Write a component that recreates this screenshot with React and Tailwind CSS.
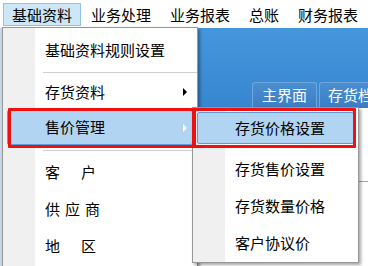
const font = "font-['Microsoft_YaHei','Noto_Sans_CJK_SC',sans-serif]";

function MenuItem({ children, arrow, active, className = '' }) {
  return (
    <div className={`relative flex items-center pl-[42px] pr-[10px] ${className}`}>
      {active && (
        <div className="absolute inset-x-[4px] inset-y-[1px] rounded-[2px] border border-[#5a9de0] bg-[#b1d4f3]" />
      )}
      <div className="relative flex-1 flex items-center">{children}</div>
      {arrow && (
        <div
          className={`relative w-0 h-0 border-y-[4px] border-y-transparent border-l-[4px] ${
            active ? 'border-l-white' : 'border-l-black'
          }`}
        />
      )}
    </div>
  );
}

export default function App() {
  const topMenu = ['基础资料', '业务处理', '业务报表', '总账', '财务报表'];

  return (
    <div className={`relative w-[368px] h-[266px] overflow-hidden bg-white text-[15px] text-black ${font}`}>
      {/* menubar */}
      <div className="h-[28px] flex items-start pt-[3px] pl-[3px] gap-[1px] bg-white">
        {topMenu.map((m, i) => (
          <div
            key={m}
            className={`h-[23px] px-[8px] flex items-center leading-none border ${
              i === 0 ? 'border-[#8fc3ec] bg-[#cde6f8]' : 'border-transparent'
            }`}
          >
            {m}
          </div>
        ))}
      </div>

      {/* blue header with tabs */}
      <div className="h-[80px] bg-[linear-gradient(to_bottom,#4597dc,#3686d0)] flex items-end pl-[252px] gap-[2px]">
        <div className="h-[26px] w-[65px] flex items-center justify-center rounded-t-[3px] border border-b-0 border-[#6ea7de] bg-[linear-gradient(to_bottom,#4b8fd2,#3a7dc3)] text-white">
          主界面
        </div>
        <div className="h-[26px] flex-1 flex items-center pl-[8px] rounded-tl-[3px] border border-r-0 border-b-0 border-[#6ea7de] bg-[linear-gradient(to_bottom,#4b8fd2,#3a7dc3)] text-white whitespace-nowrap overflow-hidden">
          存货档案
        </div>
      </div>

      {/* page content below */}
      <div className="pt-[73px] pl-[340px]">
        <div className="h-px bg-[#a6a6a6]" />
      </div>

      {/* left strip under the menu */}
      <div className="absolute left-0 top-[28px] w-[2px] h-[238px] bg-[#c9d9e8]" />

      {/* dropdown menu */}
      <div className="absolute left-[2px] top-[27px] w-[196px] h-[260px] border border-[#979797] bg-[linear-gradient(to_right,#f0f0f0_32px,#ffffff_32px)] shadow-[2px_2px_3px_rgba(0,0,0,0.35)] pt-[4px]">
        <MenuItem className="h-[37px]">基础资料规则设置</MenuItem>
        <div className="h-[6px] flex items-center pl-[40px]">
          <div className="h-px flex-1 bg-[#cfcfcf]" />
        </div>
        <MenuItem className="h-[34px]" arrow>存货资料</MenuItem>
        <MenuItem className="h-[37px]" arrow active>售价管理</MenuItem>
        <div className="h-[8px] flex items-center pl-[40px]">
          <div className="h-px flex-1 bg-[#cfcfcf]" />
        </div>
        <MenuItem className="h-[37px]">
          <span>客</span>
          <span className="ml-[21px]">户</span>
        </MenuItem>
        <MenuItem className="h-[37px]">
          <span className="tracking-[5px]">供应商</span>
        </MenuItem>
        <MenuItem className="h-[37px]">
          <span>地</span>
          <span className="ml-[21px]">区</span>
        </MenuItem>
      </div>

      {/* submenu */}
      <div className="absolute left-[192px] top-[107px] w-[167px] h-[156px] border border-[#979797] bg-[linear-gradient(to_right,#f0f0f0_32px,#ffffff_32px)] shadow-[2px_2px_3px_rgba(0,0,0,0.35)] pt-[3px]">
        <MenuItem className="h-[34px]" active>存货价格设置</MenuItem>
        <div className="h-[6px]" />
        <MenuItem className="h-[37px]">存货售价设置</MenuItem>
        <MenuItem className="h-[37px]">存货数量价格</MenuItem>
        <MenuItem className="h-[37px]">客户协议价</MenuItem>
      </div>

      {/* red annotation boxes */}
      <div className="absolute left-[8px] top-[108px] w-[187px] h-[40px] border-[3px] border-[#f01010] rounded-[1px]" />
      <div className="absolute left-[193px] top-[108px] w-[163px] h-[40px] border-[3px] border-[#f01010] rounded-[1px]" />
    </div>
  );
}
